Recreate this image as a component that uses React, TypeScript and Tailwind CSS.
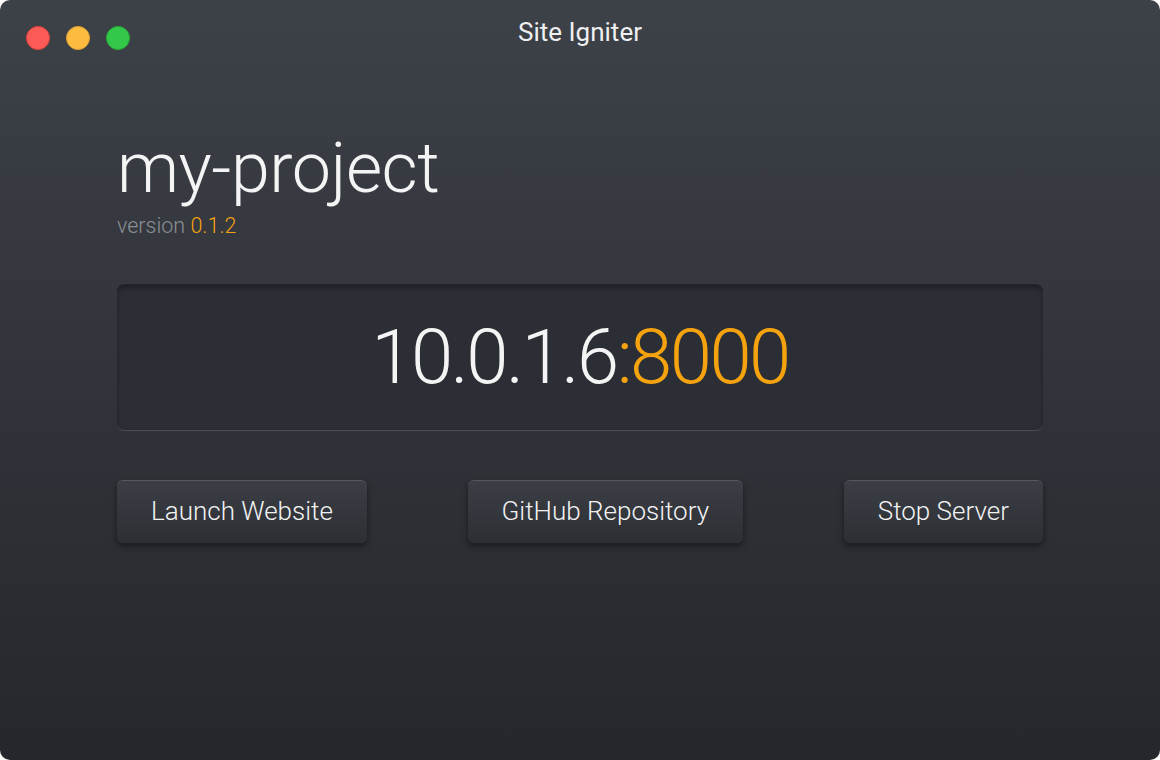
export default function App() {
  const buttons = ["Launch Website", "GitHub Repository", "Stop Server"];

  return (
    <div className="w-[1160px] h-[760px] bg-white">
      <div
        className="w-full h-full rounded-[10px] overflow-hidden bg-gradient-to-b from-[#3d4148] to-[#25272c] flex flex-col"
        style={{ fontFamily: "Roboto, 'Open Sans', sans-serif" }}
      >
        {/* title bar */}
        <div className="relative h-[68px] flex items-center justify-center">
          <div className="absolute left-[26px] top-[26px] flex gap-[16px]">
            <span className="w-[24px] h-[24px] rounded-full bg-[#fc5b57] border border-[#e0443e]" />
            <span className="w-[24px] h-[24px] rounded-full bg-[#fdbb40] border border-[#dea236]" />
            <span className="w-[24px] h-[24px] rounded-full bg-[#34c84a] border border-[#27aa35]" />
          </div>
          <span className="text-[26px] text-[#eeeff1] -mt-[3px]">Site Igniter</span>
        </div>

        <div className="px-[117px] pt-[65px]">
          <h1 className="text-[70px] font-light leading-none text-[#f4f4f5] tracking-[-0.5px]">my-project</h1>
          <p className="mt-[12px] text-[21.5px] font-light text-[#8b8f96] leading-none">
            version <span className="text-[#f5a20f]">0.1.2</span>
          </p>

          <div className="mt-[47px] h-[147px] rounded-[7px] bg-[#2b2e34] border-t border-b border-t-[#23252a] border-b-[#4a4d54] shadow-[inset_0_3px_4px_rgba(0,0,0,0.3)] flex items-center justify-center">
            <span className="text-[76px] font-light leading-none text-[#f4f4f5] tracking-[-2.5px]">
              10.0.1.6<span className="text-[#f5a20f]">:8000</span>
            </span>
          </div>

          <div className="mt-[49px] flex justify-between">
            {buttons.map((b) => (
              <button
                key={b}
                className="h-[63px] px-[34px] rounded-[6px] bg-gradient-to-b from-[#3b3e44] to-[#2c2f34] border-t border-[#55585e] shadow-[0_3px_6px_rgba(0,0,0,0.45)] text-[26px] font-light text-[#f2f2f3]"
              >
                {b}
              </button>
            ))}
          </div>
        </div>
      </div>
    </div>
  );
}
